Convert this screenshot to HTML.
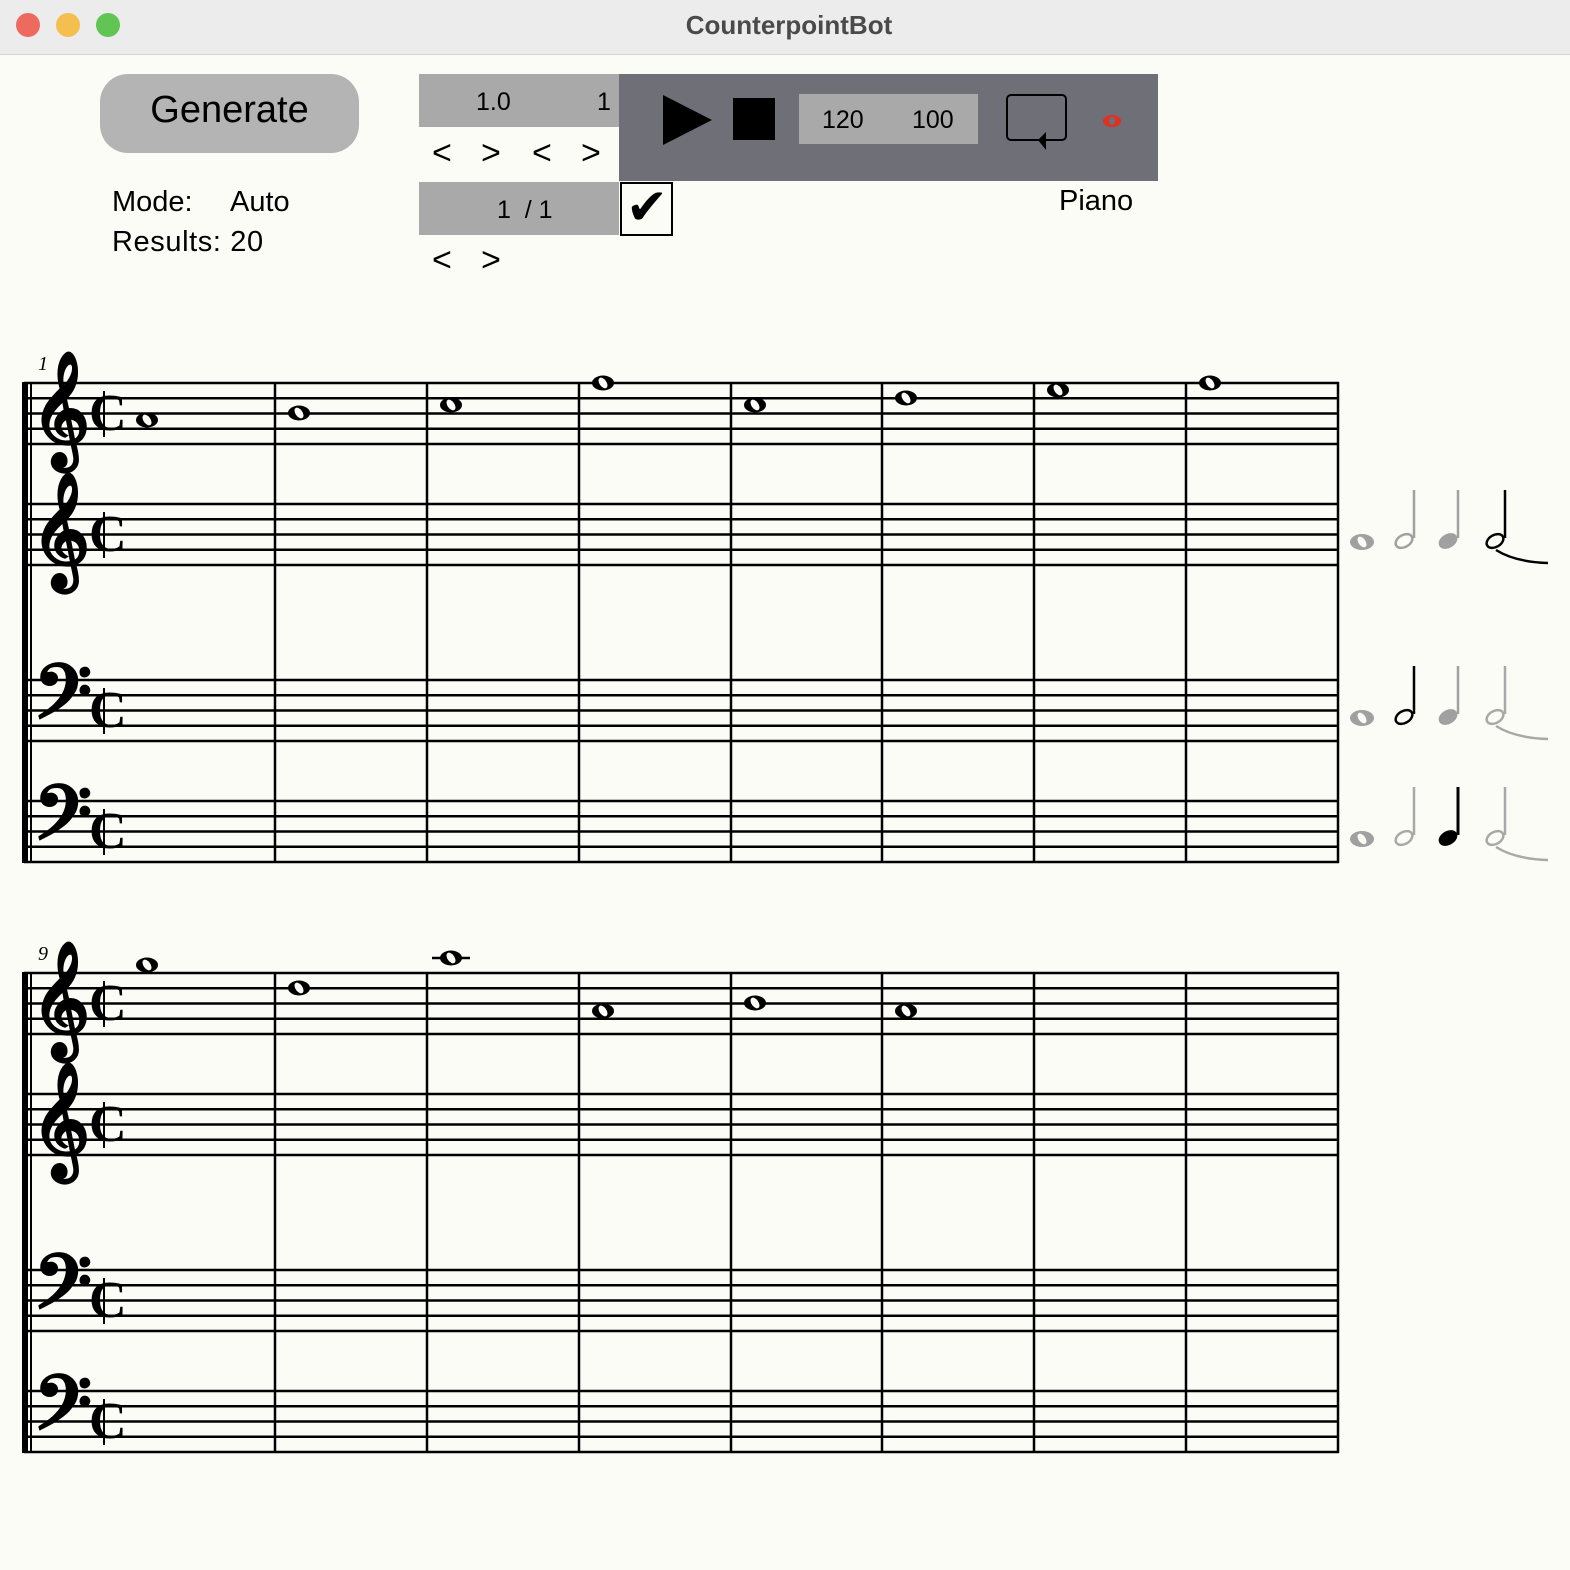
<!DOCTYPE html>
<html><head><meta charset="utf-8"><style>
html,body{margin:0;padding:0;width:1570px;height:1570px;overflow:hidden;background:#fbfcf5;font-family:"Liberation Sans",Arial,sans-serif;}
.t{position:absolute;white-space:nowrap;color:#000;}
.a{position:absolute;font-size:34px;top:134px;}
</style></head><body>
<div style="position:absolute;left:0;top:0;width:1570px;height:54px;background:#ececec;border-bottom:1px solid #d6d6d6;"></div>
<div style="position:absolute;left:16px;top:13px;width:24px;height:24px;border-radius:50%;background:#ed6a5e;"></div>
<div style="position:absolute;left:56px;top:13px;width:24px;height:24px;border-radius:50%;background:#f5bf4f;"></div>
<div style="position:absolute;left:96px;top:13px;width:24px;height:24px;border-radius:50%;background:#61c554;"></div>
<div class="t" style="left:0;width:1578px;text-align:center;top:10px;font-size:26px;font-weight:bold;color:#4a4a4a;">CounterpointBot</div>

<div style="position:absolute;left:100px;top:74px;width:259px;height:79px;border-radius:28px;background:#b4b4b4;"></div>
<div class="t" style="left:100px;width:259px;text-align:center;top:89px;font-size:38px;">Generate</div>
<div class="t" style="left:112px;top:186px;font-size:29px;">Mode:</div>
<div class="t" style="left:230px;top:186px;font-size:29px;">Auto</div>
<div class="t" style="left:112px;top:226px;font-size:29px;letter-spacing:0.6px;">Results: 20</div>

<div style="position:absolute;left:419px;top:74px;width:200px;height:53px;background:#a9a9a9;"></div>
<div class="t" style="left:476px;top:88px;font-size:25px;">1.0</div>
<div class="t" style="left:597px;top:88px;font-size:25px;">1</div>
<div class="t a" style="left:432px;">&lt;</div><div class="t a" style="left:481px;">&gt;</div><div class="t a" style="left:532px;">&lt;</div><div class="t a" style="left:581px;">&gt;</div>
<div style="position:absolute;left:619px;top:74px;width:539px;height:107px;background:#6f6f78;"></div>
<div style="position:absolute;left:799px;top:94px;width:179px;height:50px;background:#a9a9a9;"></div>
<div class="t" style="left:822px;top:106px;font-size:25px;">120</div>
<div class="t" style="left:912px;top:106px;font-size:25px;">100</div>
<div style="position:absolute;left:419px;top:182px;width:200px;height:53px;background:#a9a9a9;"></div>
<div class="t" style="left:497px;top:196px;font-size:25px;">1&nbsp;&nbsp;/ 1</div>
<div style="position:absolute;left:620px;top:182px;width:49px;height:50px;border:2px solid #000;background:#fbfcf5;"></div>
<div class="t" style="left:626px;top:178px;font-size:50px;font-family:'DejaVu Sans',sans-serif;">✔</div>
<div class="t" style="left:1059px;top:185px;font-size:29px;">Piano</div>
<div class="t a" style="left:432px;top:241px;">&lt;</div><div class="t a" style="left:481px;top:241px;">&gt;</div>

<svg width="1570" height="1570" style="position:absolute;left:0;top:0" xmlns="http://www.w3.org/2000/svg">
<polygon points="663,95 712,120 663,145" fill="#000"/>
<rect x="733" y="98" width="42" height="42" fill="#000"/>
<rect x="1007" y="95" width="59" height="45" rx="4" fill="none" stroke="#000" stroke-width="2"/>
<polygon points="1046,132 1038,140 1046,150" fill="#000"/>
<ellipse cx="1112" cy="121" rx="9" ry="6" fill="#e0301e"/><ellipse cx="1112" cy="121" rx="3" ry="4" fill="#6f6f78"/>
<defs>
<g id="st" stroke="#000" stroke-width="2.5"><line x1="24" x2="1339" y1="0" y2="0"/><line x1="24" x2="1339" y1="15.25" y2="15.25"/><line x1="24" x2="1339" y1="30.5" y2="30.5"/><line x1="24" x2="1339" y1="45.75" y2="45.75"/><line x1="24" x2="1339" y1="61" y2="61"/></g>
<g id="w"><ellipse rx="11" ry="7.5" fill="#000"/><ellipse rx="3.5" ry="6" fill="#fbfcf5" transform="rotate(-35)"/></g>
<g id="wg"><ellipse rx="12" ry="8" fill="#a0a0a0"/><ellipse rx="3.5" ry="6" fill="#fbfcf5" transform="rotate(-35)"/></g>
<g id="cut"><text x="0" y="17" font-family="Liberation Serif,serif" font-weight="bold" font-size="52">C</text><line x1="15" x2="15" y1="-22" y2="24" stroke="#000" stroke-width="2"/></g>
<g id="sys">
<use href="#st" y="0"/><use href="#st" y="121"/><use href="#st" y="297"/><use href="#st" y="418"/>
<g stroke="#000" stroke-width="2.5">
<line x1="275" x2="275" y1="0" y2="479"/><line x1="427" x2="427" y1="0" y2="479"/><line x1="579" x2="579" y1="0" y2="479"/><line x1="731" x2="731" y1="0" y2="479"/><line x1="882" x2="882" y1="0" y2="479"/><line x1="1034" x2="1034" y1="0" y2="479"/><line x1="1186" x2="1186" y1="0" y2="479"/><line x1="1338" x2="1338" y1="-1" y2="480"/>
</g>
<rect x="22" y="-1" width="6" height="481" fill="#000"/><rect x="30" y="-1" width="2" height="481" fill="#000"/>
<text x="31" y="60" font-family="DejaVu Sans,sans-serif" font-size="100" font-weight="bold">𝄞</text>
<text x="31" y="181" font-family="DejaVu Sans,sans-serif" font-size="100" font-weight="bold">𝄞</text>
<text x="33" y="350" font-family="DejaVu Sans,sans-serif" font-size="92" font-weight="bold">𝄢</text>
<text x="33" y="471" font-family="DejaVu Sans,sans-serif" font-size="92" font-weight="bold">𝄢</text>
<use href="#cut" x="89" y="30"/><use href="#cut" x="89" y="151"/><use href="#cut" x="89" y="327"/><use href="#cut" x="89" y="448"/>
</g>
</defs>
<use href="#sys" y="383"/>
<use href="#sys" y="973"/>
<text x="38" y="370" font-family="Liberation Serif,serif" font-style="italic" font-size="20">1</text>
<text x="38" y="960" font-family="Liberation Serif,serif" font-style="italic" font-size="20">9</text>
<use href="#w" x="147" y="420"/><use href="#w" x="299" y="413"/><use href="#w" x="451" y="405"/><use href="#w" x="603" y="383"/><use href="#w" x="755" y="405"/><use href="#w" x="906" y="398"/><use href="#w" x="1058" y="390"/><use href="#w" x="1210" y="383"/>
<use href="#w" x="147" y="965"/><use href="#w" x="299" y="988"/><line x1="432" x2="470" y1="958" y2="958" stroke="#000" stroke-width="2.5"/><use href="#w" x="451" y="958"/><use href="#w" x="603" y="1011"/><use href="#w" x="755" y="1003"/><use href="#w" x="906" y="1011"/>
<use href="#wg" x="1362" y="542"/>
<g stroke="#a0a0a0" fill="none" stroke-width="2.5"><ellipse cx="1404" cy="541" rx="9" ry="6" transform="rotate(-30 1404 541)"/><line x1="1414" x2="1414" y1="490" y2="538"/></g>
<ellipse cx="1448" cy="541" rx="10" ry="7" fill="#a0a0a0" transform="rotate(-30 1448 541)"/><line x1="1458" x2="1458" y1="490" y2="538" stroke="#a0a0a0" stroke-width="2.5"/>
<g stroke="#000" fill="none" stroke-width="2.5"><ellipse cx="1495" cy="541" rx="9" ry="6" transform="rotate(-30 1495 541)"/><line x1="1505" x2="1505" y1="490" y2="538"/><path d="M1496 550 Q1515 562 1548 563"/></g>
<use href="#wg" x="1362" y="718"/>
<g stroke="#000" fill="none" stroke-width="2.5"><ellipse cx="1404" cy="717" rx="9" ry="6" transform="rotate(-30 1404 717)"/><line x1="1414" x2="1414" y1="666" y2="714"/></g>
<ellipse cx="1448" cy="717" rx="10" ry="7" fill="#a0a0a0" transform="rotate(-30 1448 717)"/><line x1="1458" x2="1458" y1="666" y2="714" stroke="#a0a0a0" stroke-width="2.5"/>
<g stroke="#a8a8a8" fill="none" stroke-width="2.5"><ellipse cx="1495" cy="717" rx="9" ry="6" transform="rotate(-30 1495 717)"/><line x1="1505" x2="1505" y1="666" y2="714"/><path d="M1496 726 Q1515 738 1548 739"/></g>
<use href="#wg" x="1362" y="839"/>
<g stroke="#a8a8a8" fill="none" stroke-width="2.5"><ellipse cx="1404" cy="838" rx="9" ry="6" transform="rotate(-30 1404 838)"/><line x1="1414" x2="1414" y1="787" y2="835"/></g>
<ellipse cx="1448" cy="838" rx="10" ry="7" fill="#000" transform="rotate(-30 1448 838)"/><line x1="1458" x2="1458" y1="787" y2="835" stroke="#000" stroke-width="3"/>
<g stroke="#a8a8a8" fill="none" stroke-width="2.5"><ellipse cx="1495" cy="838" rx="9" ry="6" transform="rotate(-30 1495 838)"/><line x1="1505" x2="1505" y1="787" y2="835"/><path d="M1496 847 Q1515 859 1548 860"/></g>
</svg>
</body></html>
